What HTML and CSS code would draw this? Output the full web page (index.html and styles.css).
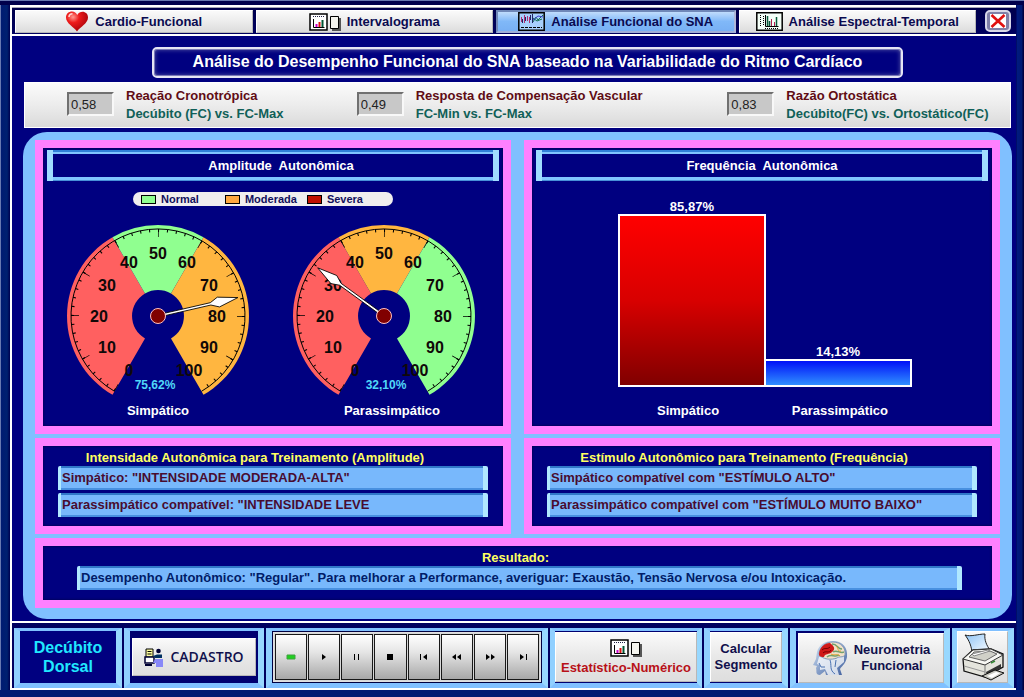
FILE: index.html
```html
<!DOCTYPE html>
<html lang="pt-BR">
<head>
<meta charset="utf-8">
<meta name="viewport" content="width=device-width, initial-scale=1">
<title>Análise Funcional do SNA</title>
<link rel="stylesheet" href="styles.css">
</head>
<body>
<svg class="defs" aria-hidden="true">
  <defs>
    <radialGradient id="heartFill" cx=".32" cy=".28" r=".8"><stop offset="0" stop-color="#ff9a90"/><stop offset=".35" stop-color="#ee1c1c"/><stop offset="1" stop-color="#a00008"/></radialGradient>
    <linearGradient id="paperFill" x1="0" y1="0" x2="1" y2="1"><stop offset="0" stop-color="#8ec4f6"/><stop offset="1" stop-color="#fff"/></linearGradient>
    <linearGradient id="headFill" x1="0" y1="0" x2="1" y2="1"><stop offset="0" stop-color="#d8e8f8"/><stop offset="1" stop-color="#3c5c9c"/></linearGradient>
    <symbol id="report" viewBox="0 0 32 18">
      <path d="M1 1h17v16H1z" fill="#fff" stroke="#000" stroke-width="1.500"/>
      <path d="M4 3.500h11" stroke="#224" stroke-dasharray="1 1"/>
      <path d="M4.500 6v8.500h11" fill="none" stroke="#000"/>
      <path d="M7.500 11v3" stroke="#c0c" stroke-width="2"/><path d="M10.500 9v5" stroke="#d11" stroke-width="2"/><path d="M13.500 7v7" stroke="#053" stroke-width="2"/>
      <path d="M23 5h9v13h-9z" fill="#555"/><path d="M21.500 3.500h8v12h-8z" fill="#f4f4ee" stroke="#000"/>
    </symbol>
    <g id="scale">
      <path d="M-43.500 75.300A87 87 0 1 1 43.500 75.300" fill="none" stroke="#000" stroke-width="1"/>
      <path d="M-42.800 74A85.500 85.500 0 1 1 42.800 74" fill="none" stroke="#000" stroke-width="3" pathLength="500" stroke-dasharray="1.200 8.800"/>
      <path d="M-41.500 71.900A83 83 0 1 1 41.500 71.900" fill="none" stroke="#000" stroke-width="8" pathLength="500" stroke-dasharray=".8 49.200"/>
    </g>
    <g id="figures" class="figures">
      <text x="-29" y="60">0</text><text x="-51" y="37">10</text><text x="-59" y="6">20</text><text x="-51" y="-25">30</text><text x="-29" y="-48">40</text><text x="0" y="-57">50</text><text x="29" y="-48">60</text><text x="51" y="-25">70</text><text x="59" y="6">80</text><text x="51" y="37">90</text><text x="31" y="60">100</text>
    </g>
    <g id="needle">
      <path d="M-1.200 0L-1.200-54L-5-62L0-82L5-62L1.200-54L1.200 0Z" fill="#fff" stroke="#000" stroke-width=".8"/>
    </g>
  </defs>
</svg>

<div class="window">
  <nav class="tabs">
    <button class="tab" type="button">
      <svg width="24" height="21" viewBox="0 0 24 21"><path d="M12 20.500C9 16 1 12.500 1 6.500C1 2.500 4 .5 7 .5C9.500 .5 11.200 2 12.200 4C13.500 1.500 15.500.8 17.500.8C20.500.8 23 3 23 6.500C23 12.500 15 16 12 20.500Z" fill="url(#heartFill)"/><path d="M4 6C4 4 5.500 2.800 7.500 2.800" fill="none" stroke="#ffd8d4" stroke-width="1.500"/></svg>
      Cardio-Funcional
    </button>
    <button class="tab" type="button"><svg width="32" height="18"><use href="#report"/></svg>Intervalograma</button>
    <button class="tab active" type="button">
      <svg width="27" height="19" viewBox="0 0 27 19"><path d="M.8.8h25.400v17.400H.8z" fill="#a8d0fc" stroke="#000" stroke-width="1.500"/><path d="M3.500 10V5M6.500 11V3M9.500 9V4M11.500 11V5" stroke="#b03070"/><path d="M4.500 11V7M7.500 9V5M12.500 8V3M14.500 11V2" stroke="#226"/><path d="M15 10L18 5L20 8L25 3M15 6L19 9L24 7" fill="none" stroke="#107050"/><path d="M15 8L20 4L25 5" fill="none" stroke="#4040d0"/><path d="M3 15.500h21" stroke="#000" stroke-dasharray="3 1"/></svg>
      Análise Funcional do SNA
    </button>
    <button class="tab" type="button">
      <svg width="27" height="19" viewBox="0 0 27 19"><path d="M.8.8h25.400v17.400H.8z" fill="#f4fff8" stroke="#000" stroke-width="1.500"/><path d="M4.500 3v12M7.500 4v10" stroke="#000" stroke-dasharray="1 1"/><path d="M9.500 3v11.500h13" fill="none" stroke="#000"/><path d="M11.500 4v10M13.500 9v5M20.500 5v9" stroke="#075a3a" stroke-width="1.500"/><path d="M15.500 7v7M18.500 10v4" stroke="#b02050"/><path d="M9 16.500h14" stroke="#000" stroke-dasharray="1 1"/></svg>
      Análise Espectral-Temporal
    </button>
    <button class="close" type="button" aria-label="Fechar"><svg width="16" height="14" viewBox="0 0 16 14"><path d="M0 0h16v14H0z" fill="#fff"/><path d="M1.500 1L14.500 13M14.500 1L1.500 13" stroke="#e01010" stroke-width="2.600"/></svg></button>
  </nav>

  <main class="content">
    <h1 class="title">Análise do Desempenho Funcional do SNA baseado na Variabilidade do Ritmo Cardíaco</h1>

    <section class="indices">
      <div class="index">
        <input id="cronotropica" type="text" value="0,58" readonly>
        <label for="cronotropica">Reação Cronotrópica<span>Decúbito (FC) vs. FC-Max</span></label>
      </div>
      <div class="index">
        <input id="vascular" type="text" value="0,49" readonly>
        <label for="vascular">Resposta de Compensação Vascular<span>FC-Min vs. FC-Max</span></label>
      </div>
      <div class="index">
        <input id="ortostatica" type="text" value="0,83" readonly>
        <label for="ortostatica">Razão Ortostática<span>Decúbito(FC) vs. Ortostático(FC)</span></label>
      </div>
    </section>

    <div class="board">
      <section class="card">
        <h2 class="heading amplitude">Amplitude&nbsp; Autonômica</h2>
        <ul class="legend">
          <li class="normal">Normal</li><li class="moderate">Moderada</li><li class="severe">Severa</li>
        </ul>
        <div class="gauges">
          <figure class="gauge">
            <svg width="184" height="172" viewBox="-92 -92 184 172" role="img" aria-label="Simpático 75,62%">
              <path d="M-13 22.500L-45.500 78.800A91 91 0 0 1-45.500-78.800L-13-22.500A26 26 0 0 0-13 22.500Z" fill="#ff6060"/>
              <path d="M-13-22.500L-45.500-78.800A91 91 0 0 1 45.500-78.800L13-22.500A26 26 0 0 0-13-22.500Z" fill="#90ff90"/>
              <path d="M13-22.500L45.500-78.800A91 91 0 0 1 45.500 78.800L13 22.500A26 26 0 0 0 13-22.500Z" fill="#ffb640"/>
              <use href="#scale"/><use href="#figures"/>
              <use href="#needle" transform="rotate(77)"/>
              <circle r="7.500" fill="#800000" stroke="#ffc0c0"/>
              <text class="reading" x="-3" y="73">75,62%</text>
            </svg>
            <figcaption>Simpático</figcaption>
          </figure>
          <figure class="gauge">
            <svg width="184" height="172" viewBox="-92 -92 184 172" role="img" aria-label="Parassimpático 32,10%">
              <path d="M-13 22.500L-45.500 78.800A91 91 0 0 1-45.500-78.800L-13-22.500A26 26 0 0 0-13 22.500Z" fill="#ff6060"/>
              <path d="M-13-22.500L-45.500-78.800A91 91 0 0 1 45.500-78.800L13-22.500A26 26 0 0 0-13-22.500Z" fill="#ffb640"/>
              <path d="M13-22.500L45.500-78.800A91 91 0 0 1 45.500 78.800L13 22.500A26 26 0 0 0 13-22.500Z" fill="#90ff90"/>
              <use href="#scale"/><use href="#figures"/>
              <use href="#needle" transform="rotate(-54)"/>
              <circle r="7.500" fill="#800000" stroke="#ffc0c0"/>
              <text class="reading" x="2" y="73">32,10%</text>
            </svg>
            <figcaption class="wide">Parassimpático</figcaption>
          </figure>
        </div>
      </section>

      <section class="card">
        <h2 class="heading">Frequência&nbsp; Autonômica</h2>
        <div class="chart">
          <div class="column"><span>85,87%</span><div class="bar red" style="height:86%"></div></div>
          <div class="column"><span>14,13%</span><div class="bar blue" style="height:14%"></div></div>
        </div>
        <div class="axis"><span>Simpático</span><span>Parassimpático</span></div>
      </section>

      <section class="card training">
        <h2>Intensidade Autonômica para Treinamento (Amplitude)</h2>
        <input class="field" type="text" aria-label="Intensidade simpática" value="Simpático: &quot;INTENSIDADE MODERADA-ALTA&quot;" readonly>
        <input class="field" type="text" aria-label="Intensidade parassimpática" value="Parassimpático compatível: &quot;INTENSIDADE LEVE" readonly>
      </section>

      <section class="card training">
        <h2>Estímulo Autonômico para Treinamento (Frequência)</h2>
        <input class="field" type="text" aria-label="Estímulo simpático" value="Simpático compatível com &quot;ESTÍMULO ALTO&quot;" readonly>
        <input class="field" type="text" aria-label="Estímulo parassimpático" value="Parassimpático compatível com &quot;ESTÍMULO MUITO BAIXO&quot;" readonly>
      </section>

      <section class="card result">
        <label for="resultado">Resultado:</label>
        <input class="field" id="resultado" type="text" value="Desempenho Autonômico: &quot;Regular&quot;. Para melhorar a Performance, averiguar: Exaustão, Tensão Nervosa e/ou Intoxicação." readonly>
      </section>
    </div>
  </main>

  <footer class="toolbar">
    <div class="cell position"><strong>Decúbito<br>Dorsal</strong></div>
    <div class="cell register">
      <button type="button">
        <svg width="20" height="19" viewBox="0 0 20 19"><path d="M2 1h7v8H2z" fill="#ffffa0" stroke="#000"/><path d="M3.500 3.500h4M3.500 6h4" stroke="#000"/><path d="M1 9h9v6H1z" fill="#fff" stroke="#003" stroke-width="1.500"/><path d="M1 17h7" stroke="#003" stroke-width="2"/><circle cx="14.500" cy="3" r="2.300" fill="#003"/><path d="M9 8L13 6.500H18V10H11Z" fill="#003060"/><path d="M11 11h8v8h-7v-4H9Z" fill="#8888f8"/></svg>
        CADASTRO
      </button>
    </div>
    <div class="cell player">
      <div class="keys">
        <button type="button" aria-label="Gravar"><svg width="10" height="10"><path d="M1 3h8v4H1z" fill="#20d020" stroke="#40a040"/></svg></button>
        <button type="button" aria-label="Reproduzir"><svg width="10" height="10"><path d="M3 2l4 3-4 3z"/></svg></button>
        <button type="button" aria-label="Pausar"><svg width="10" height="10"><path d="M2 2h1v6H2zM6 2h1v6H6z"/></svg></button>
        <button type="button" aria-label="Parar"><svg width="10" height="10"><path d="M2 2h6v6H2z"/></svg></button>
        <button type="button" aria-label="Início"><svg width="10" height="10"><path d="M1 2h1v6H1zM8 2v6L4 5z"/></svg></button>
        <button type="button" aria-label="Retroceder"><svg width="10" height="10"><path d="M4 2v6L0 5zM9 2v6L5 5z"/></svg></button>
        <button type="button" aria-label="Avançar"><svg width="10" height="10"><path d="M1 2v6l4-3zM6 2v6l4-3z"/></svg></button>
        <button type="button" aria-label="Fim"><svg width="10" height="10"><path d="M2 2v6l4-3zM8 2h1v6H8z"/></svg></button>
      </div>
    </div>
    <div class="cell stats"><button type="button"><svg width="32" height="18"><use href="#report"/></svg>Estatístico-Numérico</button></div>
    <div class="cell segment"><button type="button">Calcular<br>Segmento</button></div>
    <div class="cell neuro">
      <button type="button">
        <svg width="37" height="37" viewBox="0 0 37 37"><path d="M5 12C7 4 14 1 21 1C31 1 36 8 35 17C34 23 30 26 28 29L30 35H14L13 31L8 35C3 35 5 31 4 28L5 26L1 25L4 19Z" fill="url(#headFill)"/><path d="M7 17L5 24L8 25L8 30L13 29L16 35L27 35L25 28L32 22V15L20 18Z" fill="#fff" opacity=".75"/><path d="M7 14C8 6 14 2 21 2C29 2 34 8 33 15C31 18 27 16 25 18C20 20 10 20 7 14Z" fill="#f0e0c8" stroke="#8098b8"/><path d="M7 15C7 8 12 3 18 3C22 6 24 9 20 12C17 15 13 13 12 17C10 17 8 17 7 15Z" fill="#d01818"/><path d="M10 10C13 7 15 10 18 7M11 13C14 10 17 14 19 10" fill="none" stroke="#700"/><path d="M20 4C26 4 25 9 30 9M21 12C25 9 28 14 32 12M15 17C19 13 23 18 27 15" fill="none" stroke="#70a070" stroke-width="1.500"/><path d="M24 6C27 8 25 12 29 11M19 14C22 16 25 13 28 16" fill="none" stroke="#e0a030"/><path d="M18 20C20 25 17 30 23 34M24 20L23 27" fill="none" stroke="#4870b0"/><path d="M7 23L9 27L13 27" fill="none" stroke="#4870b0"/></svg>
        <span>Neurometria<br>Funcional</span>
      </button>
    </div>
    <div class="cell print">
      <button type="button" aria-label="Imprimir">
        <svg width="44" height="48" viewBox="0 0 44 48"><path d="M4 2C10 4 17 1 24 1C23 7 26 13 29 17L11 21C11 14 8 7 4 2Z" fill="url(#paperFill)" stroke="#222"/><path d="M2 26L12 17L30 16L42 21L42 34L24 44L3 38Z" fill="#e4e4dc" stroke="#111" stroke-width="1.300"/><path d="M2 26L24 32L42 22L30 16L12 17Z" fill="#f8f8f4" stroke="#333"/><path d="M8 24L24 28L36 21L29 18L13 19Z" fill="#d0d0c8" stroke="#666"/><path d="M11 21L27 17L29 18L13 23Z" fill="#fff" stroke="#888"/><path d="M24 32V44" stroke="#777"/><path d="M3 33L24 39" stroke="#999"/><path d="M25 39L40 31V35L26 43Z" fill="#333"/><path d="M21 43L34 37L43 40L30 47Z" fill="#c8c8c0" stroke="#111"/><path d="M26 43L35 39L39 40L31 45Z" fill="#fff"/><path d="M30 30L34 28" stroke="#383" stroke-width="1.500"/></svg>
      </button>
    </div>
  </footer>
</div>
</body>
</html>
```
FILE: styles.css
```css
* { box-sizing: border-box; }

html { background: #001a72; }

body {
  margin: 0;
  min-height: 100vh;
  display: flex;
  padding: 0 8px 7px 10px;
  border-top: 1px solid #6878b0;
  background: linear-gradient(#00004c 4px, transparent 4px), linear-gradient(transparent calc(100% - 7px), #001a72 calc(100% - 7px)), linear-gradient(90deg, #6878b0 1px, #001a72 1px, #002070 7px, #000050 10px, #000050 calc(100% - 8px), #001a80 calc(100% - 7px), #001a72 calc(100% - 2px), #000040 calc(100% - 1px));
  font: bold 13px/18px "Liberation Sans", Arial, sans-serif;
  color: #fff;
}

button, input {
  font: inherit;
  margin: 0;
}

button { cursor: pointer; }

svg { flex: none; }

h1, h2, ul, figure { margin: 0; padding: 0; }

.defs { position: absolute; width: 0; height: 0; }

.window {
  flex: 1;
  min-width: 0;
  display: flex;
  flex-direction: column;
  margin-top: 4px;
  background: #000080;
}

/* Tabs */
.tabs {
  display: flex;
  gap: 3px;
  height: 31px;
  padding: 3px 5px 1px 3px;
  border-top: 2px solid #fff;
  border-bottom: 2px solid #fff;
  border-left: 2px solid #fff;
  background: linear-gradient(#a8a8b8 1px, #00004c 1px, #000060);
}

.tab {
  flex: 1;
  min-width: 0;
  display: flex;
  align-items: center;
  justify-content: center;
  gap: 6px;
  padding: 0;
  white-space: nowrap;
  border: 1px solid;
  border-color: #fff #b8b8b8 #b8b8b8 #fff;
  background: linear-gradient(#fafafa, #ececec 50%, #dcdcdc);
  color: #0a0a50;
}

.tab.active {
  border: 2px solid;
  border-color: #7088b8 #b0b8d8 #a0b0d8 #7088b8;
  background: linear-gradient(#c0dcfc, #80b8f8 50%, #78b0f4);
}

.close {
  display: flex;
  align-items: center;
  justify-content: center;
  width: 26px;
  height: 22px;
  margin-left: 6px;
  padding: 0;
  border: 2px solid #d8d8e8;
  border-radius: 5px;
  background: #8080a8;
}

/* Content */
.content {
  flex: 1;
  display: flex;
  flex-direction: column;
  padding: 11px 4px 2px 11px;
  border-left: 2px solid #fff;
  border-bottom: 2px solid #fff;
}

.title {
  align-self: center;
  width: 76%;
  height: 31px;
  margin-left: 20px;
  border: 2px solid #e4e4f4;
  border-radius: 5px;
  box-shadow: inset 0 0 0 1px #7878b8, inset 0 0 4px 1px #5050a0;
  font-size: 16px;
  line-height: 26px;
  text-align: center;
  white-space: nowrap;
}

.indices {
  display: flex;
  height: 46px;
  margin: 4px 1px;
  padding: 4px 0 0 42px;
  border: 1px solid #fff;
  background: linear-gradient(#fbfbfb, #ececec 50%, #dadada);
}

.index {
  flex: 290;
  display: flex;
  align-items: flex-start;
  gap: 12px;
  white-space: nowrap;
}

.index:nth-child(2) { flex-grow: 371; }
.index:nth-child(3) { flex-grow: 283; }

.index input {
  width: 47px;
  height: 24px;
  margin-top: 5px;
  padding: 0 2px;
  border: 2px solid;
  border-color: #707070 #f8f8f8 #f8f8f8 #707070;
  background: #c8c8c8;
  color: #222;
  font-weight: normal;
}

.index label { color: #600c14; }
.index span { display: block; color: #106058; }

.board {
  flex: 1;
  display: grid;
  grid-template-columns: 1fr 1fr;
  grid-template-rows: 1fr auto auto;
  gap: 4px 13px;
  padding: 8px 12px 11px;
  border-radius: 24px;
  background: #80c0ff;
}

.card {
  display: flex;
  flex-direction: column;
  min-width: 0;
  border: 8px solid #ff80ff;
  background: #000080;
  box-shadow: inset 0 0 3px #000040;
}

.heading {
  height: 31px;
  margin: 2px 4px 0;
  border: solid #a0dcff;
  border-width: 0 6px;
  box-shadow: inset 0 2px #3080d8, inset 0 4px #80c4ff, inset 0 -1px #4890d8, inset 0 -4px #80c4ff;
  font-size: 13px;
  line-height: 31px;
  text-align: center;
}

.amplitude { padding-left: 16px; }

.legend {
  align-self: center;
  display: flex;
  align-items: center;
  width: 260px;
  height: 14px;
  margin: 11px 20px 0 0;
  padding: 0 8px;
  border-radius: 8px;
  background: #f0eeee;
  color: #10105c;
  font-size: 11px;
  line-height: 14px;
  list-style: none;
}

.legend li { display: flex; align-items: center; gap: 5px; margin-right: 26px; }
.legend .moderate { margin-right: 10px; }
.legend li::before { content: ""; width: 13px; height: 7px; border: 1px solid #000; background: #90ff90; }
.legend .moderate::before { background: #ffa840; }
.legend .severe::before { background: #c01000; }

.gauges {
  display: flex;
  justify-content: center;
  gap: 42px;
  margin-top: 18px;
  padding-right: 4px;
}

.gauge { display: flex; flex-direction: column; align-items: center; }
.gauge svg { display: block; }
.gauge figcaption { margin-top: 6px; }
.gauge .wide { margin-left: 16px; }
.figures { fill: #100808; font-size: 16px; text-anchor: middle; }
.reading { fill: #50d8f8; font-size: 12px; text-anchor: middle; }

.chart {
  align-self: center;
  display: flex;
  width: 64%;
  height: 201px;
  margin: 5px 0 0 6px;
}

.column {
  flex: 1;
  display: flex;
  flex-direction: column;
  justify-content: flex-end;
  text-align: center;
  line-height: 14px;
}

.column + .column { margin-left: -2px; }
.bar { flex: none; border: 2px solid #fff; }
.red { background: linear-gradient(#ff0000, #d80000 50%, #800000); }
.blue { background: linear-gradient(#0010f8, #3090ff); }

.axis {
  align-self: center;
  display: flex;
  width: 66%;
  margin: 15px 0 0 4px;
  text-align: center;
}

.axis span { flex: 1; }

.training { height: 96px; padding: 3px 15px 0; }

.training h2 {
  padding-right: 36px;
  color: #ffff60;
  font-size: 13px;
  line-height: 17px;
  text-align: center;
  white-space: nowrap;
}

.field {
  width: 100%;
  height: 24px;
  padding: 0 0 1px 1px;
  border: solid;
  border-width: 0 5px 0 3px;
  border-color: #b0e8ff;
  border-radius: 2px 2px 0 0;
  box-shadow: inset 0 2px #3078c8, inset 0 -2px #4890e0;
  background: #78b8fc;
  color: #480c30;
}

.field + .field { margin-top: 3px; }

.result {
  grid-column: 1 / -1;
  height: 70px;
  padding: 3px 30px 0 34px;
}

.result label { align-self: center; margin-right: 8px; color: #ffff60; line-height: 17px; }
.result .field { color: #001c68; }

/* Toolbar */
.toolbar {
  display: grid;
  grid-template-columns: 108fr 140fr 282fr 152fr 84fr 160fr 62fr;
  gap: 2px;
  height: 67px;
  padding: 5px 2px 0 4px;
  border-bottom: 2px solid #fff;
  background: linear-gradient(90deg, #fff 2px, #000060 2px);
}

.cell {
  min-width: 0;
  display: flex;
  border: solid;
  border-width: 3px 6px 5px;
  border-color: #80c0ff #98d8ff #80c0ff #90d0ff;
  background: #000070;
}

.cell button {
  flex: 1;
  min-width: 0;
  display: flex;
  align-items: center;
  justify-content: center;
  padding: 0;
  border: 1px solid;
  border-color: #fff #b8b8b8 #b8b8b8 #fff;
  background: linear-gradient(#fafafa, #e8e8e8 50%, #dedede);
  color: #10104c;
  line-height: 16px;
}

.position { align-items: center; justify-content: center; background: #000080; }
.position strong { color: #20e8ff; font-size: 16px; line-height: 19px; text-align: center; }
.register { padding: 7px 2px; }
.register button { gap: 6px; font: 600 14px/18px "Open Sans", sans-serif; }

.keys {
  flex: 1;
  display: flex;
  gap: 1px;
  padding: 1px;
  border: 2px solid #e0e0e0;
  outline: 1px solid #000040;
  outline-offset: -1px;
  background: #d8d8d8;
}

.cell .keys button {
  border: 1px solid #181818;
  background: linear-gradient(#fff, #e4e4e4 40%, #a8a8a8);
}

.cell.stats { padding: 1px 0; border-width: 3px 5px 5px; }
.cell.stats button { flex-direction: column; gap: 3px; color: #b81018; }
.segment { padding: 1px 0; }
.neuro { padding: 2px 0 0 2px; }
.neuro button { gap: 5px; }
.cell.print { border-width: 3px 6px 5px 5px; }
```
